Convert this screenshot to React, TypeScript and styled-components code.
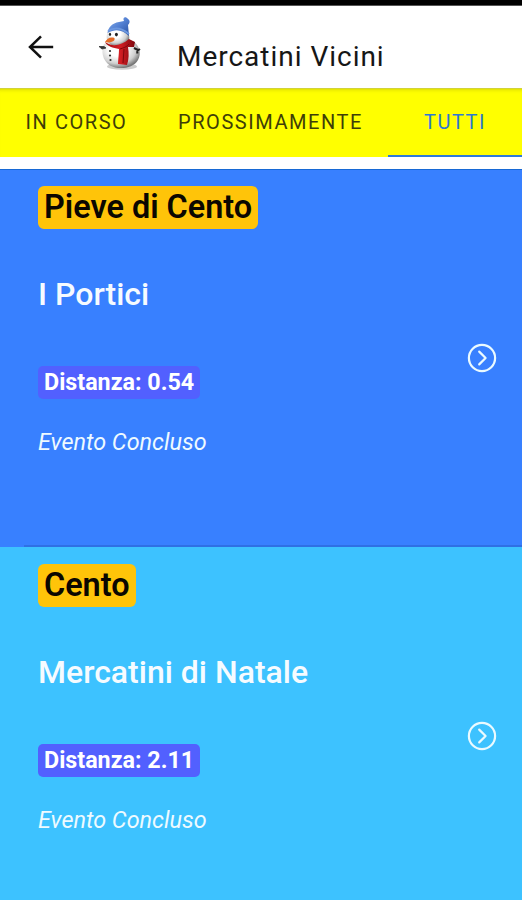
import React from "react";
import styled, { createGlobalStyle } from "styled-components";

const GlobalStyle = createGlobalStyle`
  * { box-sizing: border-box; }
  body {
    margin: 0;
    background: #fff;
    font-family: Roboto, "Liberation Sans", sans-serif;
  }
`;

const Screen = styled.div`
  width: 522px;
  height: 900px;
  overflow: hidden;
  display: flex;
  flex-direction: column;
  background: #fff;
`;

const StatusBar = styled.div`
  height: 6px;
  flex: none;
  background: #000;
  border-bottom: 1px solid #555;
`;

const Toolbar = styled.header`
  height: 82px;
  flex: none;
  display: flex;
  align-items: flex-start;
  padding-left: 28px;
`;

const BackButton = styled.button`
  width: 26px;
  height: 24px;
  margin: 29px 44px 0 0;
  padding: 0;
  border: 0;
  background: none;
  color: #111;
  svg { display: block; }
`;

const Logo = styled.div`
  width: 46px;
  height: 56px;
  margin-top: 10px;
  svg { display: block; }
`;

const Title = styled.h1`
  margin: 31px 0 0 33px;
  font-size: 28px;
  line-height: 40px;
  font-weight: 400;
  letter-spacing: 0.98px;
  color: #161616;
  white-space: nowrap;
`;

const Tabs = styled.nav`
  height: 69px;
  flex: none;
  display: flex;
  background: #ff0;
  box-shadow: inset 0 1px 0 #d2d23a, inset 0 5px 4px -4px rgba(110, 110, 0, 0.4);
`;

const Tab = styled.button<{ $width: number; $active?: boolean }>`
  width: ${(p) => p.$width}px;
  flex: none;
  padding: 1px 0 0;
  border: 0;
  border-bottom: 2px solid ${(p) => (p.$active ? "#2f7bd8" : "transparent")};
  background: none;
  font: 400 20px/24px Roboto, "Liberation Sans", sans-serif;
  letter-spacing: 1.55px;
  white-space: nowrap;
  color: ${(p) => (p.$active ? "#2b78d4" : "#3e3e08")};
`;

const List = styled.main`
  margin-top: 12px;
`;

const Row = styled.article<{ $color: string; $edge: string; $divider: string }>`
  height: 378px;
  display: flex;
  align-items: center;
  justify-content: space-between;
  padding: 0 25px 0 38px;
  background:
    linear-gradient(${(p) => p.$divider}, ${(p) => p.$divider}) 24px 100% / 100% 2px no-repeat,
    ${(p) => p.$color};
  box-shadow: inset 0 1px 0 ${(p) => p.$edge};
`;

const Details = styled.div`
  align-self: stretch;
  display: flex;
  flex-direction: column;
  align-items: flex-start;
  padding-top: 17px;
  white-space: nowrap;
`;

const Place = styled.h2`
  margin: 0;
  height: 43px;
  padding: 0 6px;
  border-radius: 6px;
  background: #ffc409;
  font-size: 32.4px;
  line-height: 42px;
  font-weight: 600;
  color: #0b0700;
`;

const Name = styled.h3`
  margin: 45px 0 0;
  font-size: 32px;
  line-height: 40px;
  font-weight: 500;
  color: #f6fbff;
`;

const Distance = styled.div`
  height: 33px;
  margin-top: 52px;
  padding: 0 6px;
  border-radius: 5px;
  background: #5260ff;
  font-size: 23.3px;
  line-height: 32px;
  font-weight: 700;
  color: #fff;
`;

const Status = styled.em`
  margin-top: 28px;
  font-size: 23.4px;
  line-height: 30px;
  font-style: italic;
  color: #eefaff;
`;

const RowIcon = styled.svg`
  display: block;
  flex: none;
`;

const BackArrow = () => (
  <svg width="26" height="24" viewBox="0 0 26 24" fill="none" stroke="currentColor" strokeWidth="2.5">
    <path d="M13 1.4 2 12 13 22.6M2 12H25.2" />
  </svg>
);

const Snowman = () => (
  <svg width="46" height="56" viewBox="0 0 46 56">
    <defs>
      <radialGradient id="snow" cx="0.4" cy="0.35" r="0.65">
        <stop offset="0.35" stopColor="#fff" />
        <stop offset="0.75" stopColor="#cfcfcf" />
        <stop offset="1" stopColor="#777" />
      </radialGradient>
      <linearGradient id="hat" x1="0" y1="0" x2="1" y2="1">
        <stop offset="0" stopColor="#89b2ec" />
        <stop offset="0.5" stopColor="#527fd2" />
        <stop offset="1" stopColor="#294f9e" />
      </linearGradient>
      <linearGradient id="scarf" x1="0" y1="0" x2="1" y2="0">
        <stop offset="0" stopColor="#a40d12" />
        <stop offset="0.5" stopColor="#d41e24" />
        <stop offset="1" stopColor="#7d070d" />
      </linearGradient>
    </defs>
    <ellipse cx="24" cy="50.5" rx="15" ry="3.2" fill="#aaa" opacity="0.6" />
    <path d="M6 28C3 35 4 44 12 49.5C20 54 35 53 40 44C44 37 41 29 35 25L19 24Z" fill="url(#snow)" />
    <path d="M1 30.5 6 30.5 8 32 4 33Z" fill="#333" stroke="#333" strokeWidth="0.8" />
    <path d="M36 32 40 34M39 35 42 33M39 35 39.5 37.5" stroke="#222" strokeWidth="2" />
    <path d="M10 15C8 20 8 25 12 28C18 32 29 30 31 24C32 19 30 14 26 11Z" fill="url(#snow)" />
    <path d="M9.5 17C10 12 14 7 21 6L26 5C24 1 28 0 30 3C33 5 31 8 30 9L31 20C25 14 18 12 9.5 17Z" fill="url(#hat)" />
    <path d="M10 15C18 10 25 13 31 18" fill="none" stroke="#6d98df" strokeWidth="2" />
    <ellipse cx="12" cy="18.3" rx="1.1" ry="1.6" fill="#222" />
    <ellipse cx="18.4" cy="18.6" rx="1.5" ry="1.8" fill="#222" />
    <path d="M16.5 22C12.5 20.5 9 22.5 7 26C10 27 15.5 26 16.5 24Z" fill="#e56b25" />
    <path d="M7 26C14 31 23 30 31 23L37 26 36 31 30 31C31 37 31 43 29 49L20 48C20 44 21 38 21 33C15 32 9 30 7 26Z" fill="url(#scarf)" />
    <path d="M22 33C25 32 29 31 31 28M26 33 25 47" fill="none" stroke="#7d070d" strokeWidth="1" />
    <circle cx="12" cy="35" r="1.1" fill="#333" />
    <circle cx="12" cy="39.5" r="1.1" fill="#333" />
    <circle cx="12.5" cy="44" r="1.1" fill="#333" />
  </svg>
);

const Chevron = () => (
  <RowIcon width="30" height="30" viewBox="0 0 30 30" fill="none" stroke="#eafaff" strokeWidth="2.2">
    <circle cx="15" cy="15" r="13.1" />
    <path d="m12.2 8.6 6.4 6.4-6.4 6.4" strokeWidth="2.2" strokeLinecap="round" strokeLinejoin="round" />
  </RowIcon>
);

const markets = [
  { place: "Pieve di Cento", name: "I Portici", distance: "0.54", color: "#3880ff", edge: "#1769d5", divider: "#2f70e4" },
  { place: "Cento", name: "Mercatini di Natale", distance: "2.11", color: "#3dc2ff", edge: "#3dc2ff", divider: "#36abe0" },
];

export default function App() {
  return (
    <Screen>
      <GlobalStyle />
      <StatusBar />
      <Toolbar>
        <BackButton aria-label="Indietro"><BackArrow /></BackButton>
        <Logo><Snowman /></Logo>
        <Title>Mercatini Vicini</Title>
      </Toolbar>
      <Tabs>
        <Tab $width={153}>IN CORSO</Tab>
        <Tab $width={235}>PROSSIMAMENTE</Tab>
        <Tab $width={134} $active>TUTTI</Tab>
      </Tabs>
      <List>
        {markets.map((m) => (
          <Row key={m.place} $color={m.color} $edge={m.edge} $divider={m.divider}>
            <Details>
              <Place>{m.place}</Place>
              <Name>{m.name}</Name>
              <Distance>Distanza: {m.distance}</Distance>
              <Status>Evento Concluso</Status>
            </Details>
            <Chevron />
          </Row>
        ))}
      </List>
    </Screen>
  );
}
